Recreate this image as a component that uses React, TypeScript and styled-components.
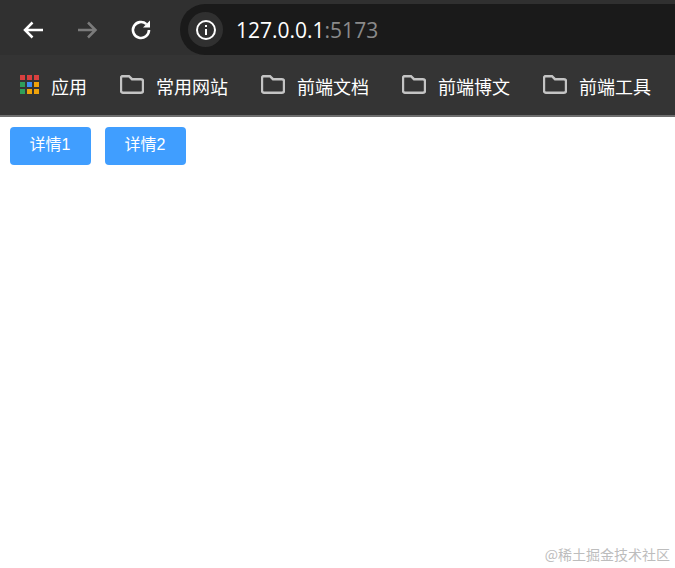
import styled, { createGlobalStyle } from "styled-components";

const GlobalStyle = createGlobalStyle`
  html, body {
    margin: 0;
    padding: 0;
    background: #fff;
    font-family: "Liberation Sans", "Noto Sans CJK SC", sans-serif;
  }
`;

const Page = styled.div`
  position: relative;
  width: 675px;
  height: 568px;
  overflow: hidden;
`;

const Toolbar = styled.div`
  display: flex;
  align-items: center;
  height: 55px;
  padding: 4px 0 0 19px;
  box-sizing: border-box;
  background: #303030;
`;

const NavButton = styled.button`
  display: flex;
  width: 28px;
  height: 28px;
  margin-right: 26px;
  padding: 2px;
  box-sizing: border-box;
  border: 0;
  background: none;
  color: ${(props) => (props.disabled ? "#7b7b7b" : "#fff")};
`;

const Omnibox = styled.div`
  display: flex;
  align-items: center;
  flex: 1;
  height: 51px;
  margin-left: -1px;
  padding-left: 8px;
  background: #1a1a1a;
  border-radius: 25px 0 0 25px;
`;

const InfoBadge = styled.div`
  display: flex;
  align-items: center;
  justify-content: center;
  width: 35px;
  height: 35px;
  margin-right: 13px;
  border-radius: 50%;
  background: #303030;
  color: #fff;
`;

const Host = styled.span`
  font-family: "Open Sans", "Noto Sans", sans-serif;
  font-size: 21px;
  color: #fff;
`;

const Port = styled.span`
  font-family: "Open Sans", "Noto Sans", sans-serif;
  font-size: 21px;
  color: #8a8a8a;
`;

const BookmarkBar = styled.div`
  display: flex;
  align-items: center;
  height: 62px;
  padding: 0 0 2px 20px;
  box-sizing: border-box;
  background: #343434;
  border-bottom: 2px solid #6e6e6e;
`;

const Bookmark = styled.div`
  display: flex;
  align-items: center;
  gap: 12px;
  margin-right: 33px;
  color: #fff;
  font-size: 18px;
  white-space: nowrap;
`;

const BookmarkLabel = styled.span`
  padding-top: 3px;
`;

const FolderSvg = styled.svg`
  margin-top: 1px;
`;

const AppsGrid = styled.div`
  display: grid;
  grid-template-columns: repeat(3, 5px);
  grid-template-rows: repeat(3, 5px);
  gap: 2px;
`;

const AppsDot = styled.i<{ $color: string }>`
  display: block;
  background: ${(props) => props.$color};
`;

const Actions = styled.div`
  display: flex;
  gap: 14px;
  padding: 10px 10px 0;
`;

const Button = styled.button`
  width: 81px;
  height: 38px;
  padding: 0 1px 6px 0;
  border: 0;
  border-radius: 4px;
  background: #409eff;
  color: #fff;
  font-family: inherit;
  font-size: 16px;
`;

const Watermark = styled.div`
  position: absolute;
  right: 5px;
  bottom: 4px;
  color: #bdbdbd;
  font-family: "Noto Sans CJK SC", sans-serif;
  font-size: 14px;
`;

const appsColors = ["#d9403f", "#d9403f", "#d9403f", "#2f9e5a", "#3f8cf0", "#f0a30a", "#2f9e5a", "#f0a30a", "#f0a30a"];
const folders = ["常用网站", "前端文档", "前端博文", "前端工具"];

const FolderIcon = () => (
    <FolderSvg width="24" height="19" viewBox="0 0 24 19" fill="none" stroke="#c4c4c4" strokeWidth="2.4">
        <path d="M3 1.200h6l3 3h9a2 2 0 0 1 2 2v9.600a2 2 0 0 1-2 2h-18a2 2 0 0 1-2-2v-12.800a2 2 0 0 1 2-2z" />
    </FolderSvg>
);

export default function App() {
    return <Page>
        <GlobalStyle />
        <Toolbar>
            <NavButton>
                <svg viewBox="0 0 24 24" fill="none" stroke="currentColor" strokeWidth="2.5">
                    <path d="M22 12H4M11.500 4.500 4 12l7.500 7.500" />
                </svg>
            </NavButton>
            <NavButton disabled>
                <svg viewBox="0 0 24 24" fill="none" stroke="currentColor" strokeWidth="2.5">
                    <path d="M3 12h17.500M13 4.500l7.500 7.500-7.500 7.500" />
                </svg>
            </NavButton>
            <NavButton>
                <svg viewBox="0 0 24 24" fill="none" stroke="currentColor" strokeWidth="2.6">
                    <path d="M20 12a8 8 0 1 1-2.600-5.900" />
                    <path d="M21 2.500v7h-7z" fill="currentColor" stroke="none" />
                </svg>
            </NavButton>
            <Omnibox>
                <InfoBadge>
                    <svg width="22" height="22" viewBox="0 0 22 22" fill="none" stroke="currentColor" strokeWidth="2">
                        <circle cx="11" cy="11" r="9" />
                        <path d="M11 10v6M11 6v2" />
                    </svg>
                </InfoBadge>
                <Host>127.0.0.1</Host>
                <Port>:5173</Port>
            </Omnibox>
        </Toolbar>
        <BookmarkBar>
            <Bookmark>
                <AppsGrid>
                    {appsColors.map((color, i) => <AppsDot key={i} $color={color} />)}
                </AppsGrid>
                <BookmarkLabel>应用</BookmarkLabel>
            </Bookmark>
            {folders.map((name) => (
                <Bookmark key={name}>
                    <FolderIcon />
                    <BookmarkLabel>{name}</BookmarkLabel>
                </Bookmark>
            ))}
        </BookmarkBar>
        <Actions>
            <Button>详情1</Button>
            <Button>详情2</Button>
        </Actions>
        <Watermark>@稀土掘金技术社区</Watermark>
    </Page>
}
